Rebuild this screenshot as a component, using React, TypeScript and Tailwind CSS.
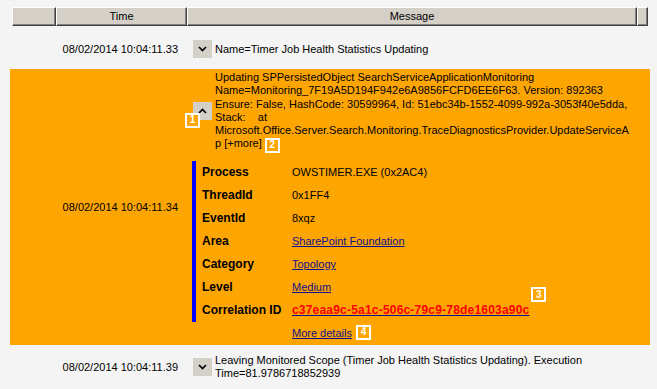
import React from "react";

const font = "font-['Liberation_Sans',Arial,sans-serif]";

function Badge({ n, className = "" }: { n: number; className?: string }) {
  return (
    <span
      className={`flex h-[15px] w-[15px] items-center justify-center border-2 border-white bg-[#ffa500] text-[10px] font-bold leading-none text-white ${className}`}
    >
      {n}
    </span>
  );
}

function Chevron({ up = false }: { up?: boolean }) {
  return (
    <svg width="9" height="6" viewBox="0 0 9 6">
      <polyline
        points={up ? "1,5 4.5,1.5 8,5" : "1,1 4.5,4.5 8,1"}
        fill="none"
        stroke="#000"
        strokeWidth="1.7"
      />
    </svg>
  );
}

function HeaderCell({ w, label }: { w: string; label?: string }) {
  return (
    <div
      className={`${w} flex h-full items-center justify-center border-l border-t border-l-white border-t-white border-b border-r border-b-[#404040] border-r-[#404040] bg-[#d4d0c8] text-[11px] text-black shadow-[inset_-1px_-1px_0_#808080]`}
    >
      {label}
    </div>
  );
}

function DetailRow({ label, children }: { label: string; children: React.ReactNode }) {
  return (
    <div className="flex h-[23px] items-center">
      <div className="w-[90px] text-[12px] font-bold text-black">{label}</div>
      <div className="flex items-center text-[11px] text-black">{children}</div>
    </div>
  );
}

const link = "text-[#10108a] underline decoration-[#10108a]";

export default function App() {
  const msgLines = [
    "Updating SPPersistedObject SearchServiceApplicationMonitoring",
    "Name=Monitoring_7F19A5D194F942e6A9856FCFD6EE6F63. Version: 892363",
    "Ensure: False, HashCode: 30599964, Id: 51ebc34b-1552-4099-992a-3053f40e5dda,",
    "Stack:    at",
    "Microsoft.Office.Server.Search.Monitoring.TraceDiagnosticsProvider.UpdateServiceA",
  ];
  return (
    <div className={`h-[389px] w-[657px] overflow-hidden bg-[#f4f4f4] ${font} text-[11px] text-black`}>
      {/* header */}
      <div className="pl-[12px] pt-[7px]">
        <div className="flex h-[19px]">
          <HeaderCell w="w-[44px]" />
          <HeaderCell w="w-[131px]" label="Time" />
          <HeaderCell w="w-[450px]" label="Message" />
          <HeaderCell w="w-[11px]" />
        </div>
      </div>

      {/* row 1 */}
      <div className="ml-[10px] flex h-[43px] items-center pt-[3px]">
        <div className="w-[183px] pr-[15px] text-right">08/02/2014 10:04:11.33</div>
        <div className="flex items-center gap-[3px]">
          <div className="flex h-[18px] w-[19px] items-center justify-center bg-[#d4d0c8]">
            <Chevron />
          </div>
          <div className="whitespace-nowrap">Name=Timer Job Health Statistics Updating</div>
        </div>
      </div>

      {/* row 2 (selected) */}
      <div className="ml-[10px] flex h-[276px] w-[640px] bg-[#ffa500]">
        <div className="flex w-[183px] items-center justify-end pr-[15px]">08/02/2014 10:04:11.34</div>
        <div className="flex flex-col">
          <div className="flex items-center gap-[3px] pt-[2px]">
            <div className="relative flex h-[18px] w-[19px] items-center justify-center bg-[#d4d0c8]">
              <Chevron up />
              <Badge n={1} className="absolute left-[-8px] top-[11px]" />
            </div>
            <div className="whitespace-nowrap leading-[13.3px]">
              {msgLines.map((l, i) => (
                <div key={i} className="h-[13.3px] whitespace-pre">
                  {l}
                </div>
              ))}
              <div className="flex h-[13.3px] items-center gap-[3px]">
                <span>p [+more]</span>
                <Badge n={2} className="mt-[2px]" />
              </div>
            </div>
          </div>

          <div className="ml-[-1px] mt-[10px] flex flex-col">
            <div className="border-l-4 border-[#0000ff] pl-[6px]">
              <DetailRow label="Process">OWSTIMER.EXE (0x2AC4)</DetailRow>
              <DetailRow label="ThreadId">0x1FF4</DetailRow>
              <DetailRow label="EventId">8xqz</DetailRow>
              <DetailRow label="Area">
                <span className={link}>SharePoint Foundation</span>
              </DetailRow>
              <DetailRow label="Category">
                <span className={link}>Topology</span>
              </DetailRow>
              <DetailRow label="Level">
                <span className={link}>Medium</span>
              </DetailRow>
              <DetailRow label="Correlation ID">
                <span className="relative text-[12px] font-bold tracking-[0.2px] text-[#ff0000] underline decoration-[#10108a]">
                  c37eaa9c-5a1c-506c-79c9-78de1603a90c
                  <Badge n={3} className="absolute left-full top-[-14px] ml-[2px]" />
                </span>
              </DetailRow>
            </div>
            <div className="flex h-[23px] items-center pl-[10px]">
              <div className="w-[90px]" />
              <span className={link}>More details</span>
              <Badge n={4} className="ml-[4px] mt-[-2px]" />
            </div>
          </div>
        </div>
      </div>

      {/* row 3 */}
      <div className="ml-[10px] flex h-[44px] items-center">
        <div className="w-[183px] pr-[15px] text-right">08/02/2014 10:04:11.39</div>
        <div className="flex items-center gap-[3px]">
          <div className="flex h-[18px] w-[19px] items-center justify-center bg-[#d4d0c8]">
            <Chevron />
          </div>
          <div className="whitespace-nowrap leading-[13px]">
            <div>Leaving Monitored Scope (Timer Job Health Statistics Updating). Execution</div>
            <div>Time=81.9786718852939</div>
          </div>
        </div>
      </div>
    </div>
  );
}
